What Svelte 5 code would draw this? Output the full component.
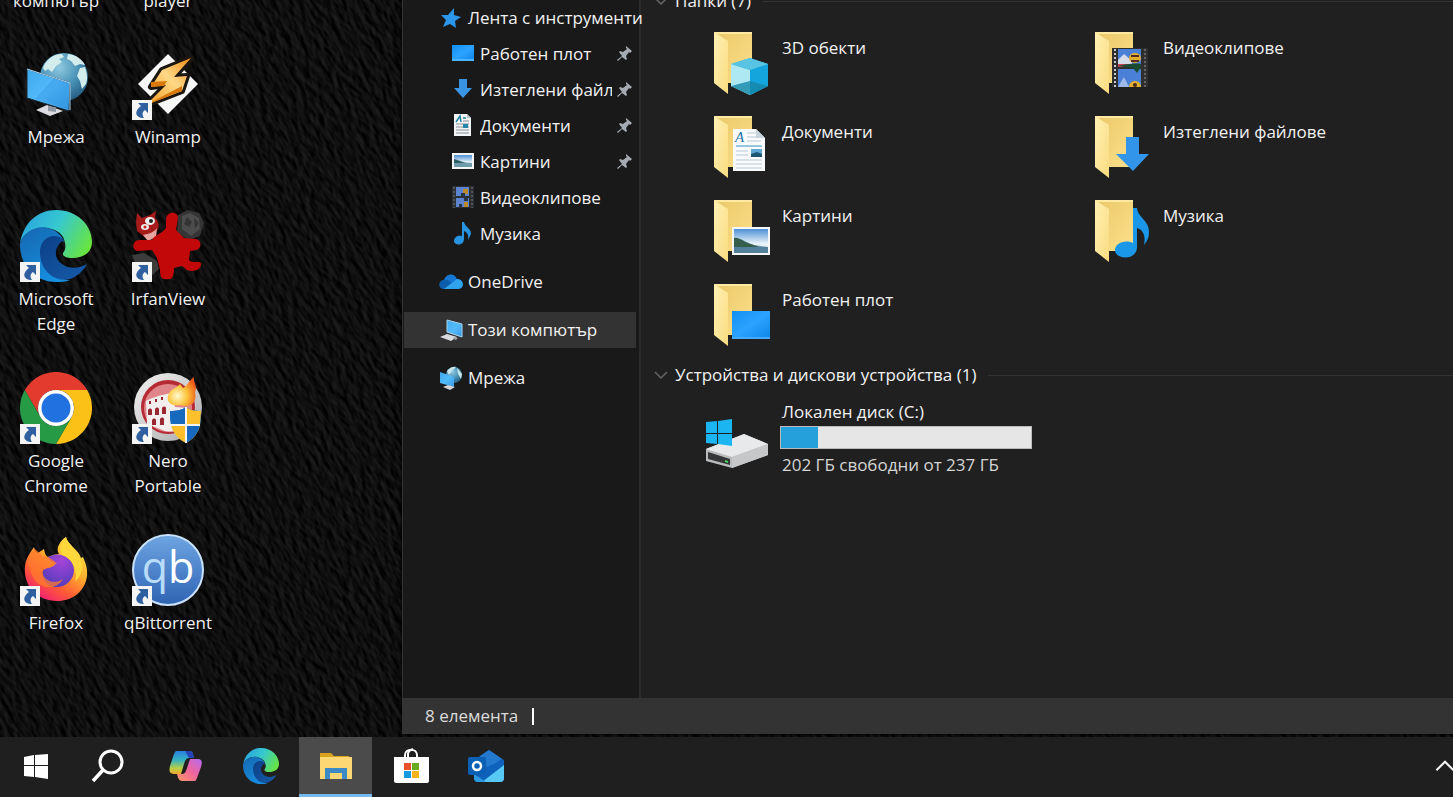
<script>
    let cutLabels = ['компютър', 'player'];

    let shortcuts = [
        { icon: 'network', name: 'Мрежа', link: false },
        { icon: 'winamp', name: 'Winamp', link: true },
        { icon: 'edge', name: 'Microsoft Edge', link: true },
        { icon: 'irfan', name: 'IrfanView', link: true },
        { icon: 'chrome', name: 'Google Chrome', link: true },
        { icon: 'nero', name: 'Nero Portable', link: true },
        { icon: 'firefox', name: 'Firefox', link: true },
        { icon: 'qbit', name: 'qBittorrent', link: true }
    ];

    let quickAccess = [
        { icon: 's-desktop', name: 'Работен плот', pinned: true },
        { icon: 's-download', name: 'Изтеглени файлове', pinned: true },
        { icon: 's-document', name: 'Документи', pinned: true },
        { icon: 's-picture', name: 'Картини', pinned: true },
        { icon: 's-video', name: 'Видеоклипове', pinned: false },
        { icon: 's-music', name: 'Музика', pinned: false }
    ];

    let places = [
        { icon: 's-cloud', name: 'OneDrive' },
        { icon: 's-pc', name: 'Този компютър' },
        { icon: 's-network', name: 'Мрежа' }
    ];

    let folders = [
        { icon: 'f-cube', name: '3D обекти' },
        { icon: 'f-video', name: 'Видеоклипове' },
        { icon: 'f-document', name: 'Документи' },
        { icon: 'f-download', name: 'Изтеглени файлове' },
        { icon: 'f-picture', name: 'Картини' },
        { icon: 'f-music', name: 'Музика' },
        { icon: 'f-desktop', name: 'Работен плот' }
    ];

    let apps = [
        { icon: 't-copilot', name: 'Copilot' },
        { icon: 'edge', name: 'Microsoft Edge' },
        { icon: 't-explorer', name: 'File Explorer' },
        { icon: 't-store', name: 'Microsoft Store' },
        { icon: 't-outlook', name: 'Outlook' }
    ];

    let selected = $state('Този компютър');
    let activeApp = $state('File Explorer');
    let foldersOpen = $state(true);
    let drivesOpen = $state(true);
</script>

<svg class="defs" width="0" height="0" aria-hidden="true">
    <defs>
        <filter id="leather" x="0" y="0" width="100%" height="100%" color-interpolation-filters="sRGB">
            <feTurbulence type="fractalNoise" baseFrequency="0.17 0.08" numOctaves="2" seed="8" result="noise" />
            <feDiffuseLighting in="noise" lighting-color="#262626" surfaceScale="2" diffuseConstant="0.9">
                <feDistantLight azimuth="190" elevation="26" />
            </feDiffuseLighting>
        </filter>
        <linearGradient id="gScreen" x1="0" y1="0" x2="1" y2="1">
            <stop offset="0" stop-color="#3da8ee" /><stop offset=".5" stop-color="#54bbfa" /><stop offset="1" stop-color="#3598e4" />
        </linearGradient>
        <radialGradient id="gGlobe" cx=".4" cy=".3" r=".8">
            <stop offset="0" stop-color="#8fc9e0" /><stop offset=".5" stop-color="#4a93b8" /><stop offset="1" stop-color="#1d5277" />
        </radialGradient>
        <linearGradient id="gBolt" x1="1" y1="0" x2="0" y2="1">
            <stop offset="0" stop-color="#f08a12" /><stop offset=".45" stop-color="#ffd887" /><stop offset="1" stop-color="#f39a1e" />
        </linearGradient>
        <linearGradient id="gEdgeTop" x1="0" y1=".3" x2="1" y2=".7">
            <stop offset="0" stop-color="#2aa5dd" /><stop offset=".45" stop-color="#36c8d0" /><stop offset="1" stop-color="#69e53b" />
        </linearGradient>
        <linearGradient id="gEdgeLeft" x1="0" y1="0" x2=".6" y2="1">
            <stop offset="0" stop-color="#1666ae" /><stop offset="1" stop-color="#168fe0" />
        </linearGradient>
        <linearGradient id="gEdgeDark" x1="0" y1="0" x2="1" y2="1">
            <stop offset="0" stop-color="#0c3f86" /><stop offset="1" stop-color="#165cab" />
        </linearGradient>
        <linearGradient id="gFox" x1=".85" y1="0" x2=".2" y2="1">
            <stop offset="0" stop-color="#fff04a" /><stop offset=".4" stop-color="#ffb02e" /><stop offset=".7" stop-color="#ff5a36" /><stop offset="1" stop-color="#ee1580" />
        </linearGradient>
        <radialGradient id="gFoxBall" cx=".6" cy=".2" r=".9">
            <stop offset="0" stop-color="#a545d8" /><stop offset="1" stop-color="#4b3bb8" />
        </radialGradient>
        <linearGradient id="gQb" x1="0" y1="0" x2="0" y2="1">
            <stop offset="0" stop-color="#6ea5e2" /><stop offset="1" stop-color="#2f64b4" />
        </linearGradient>
        <linearGradient id="gSilver" x1="0" y1="0" x2="1" y2="1">
            <stop offset="0" stop-color="#f3f3f3" /><stop offset="1" stop-color="#a9a9ab" />
        </linearGradient>
        <radialGradient id="gFlame" cx=".35" cy=".65" r=".7">
            <stop offset="0" stop-color="#fffbd0" /><stop offset=".5" stop-color="#fcc43a" /><stop offset="1" stop-color="#ee5b1a" />
        </radialGradient>
        <linearGradient id="gFlap" x1="0" y1="0" x2="1" y2="1">
            <stop offset="0" stop-color="#fff0b4" /><stop offset="1" stop-color="#f9dc80" />
        </linearGradient>
        <linearGradient id="gBack" x1="0" y1="0" x2="1" y2="1">
            <stop offset="0" stop-color="#ebc868" /><stop offset="1" stop-color="#fce08c" />
        </linearGradient>
        <linearGradient id="gSky" x1="0" y1="0" x2="0" y2="1">
            <stop offset="0" stop-color="#4d8fd6" /><stop offset=".6" stop-color="#e6f2f8" />
        </linearGradient>
        <linearGradient id="gDesk" x1="0" y1="0" x2="1" y2="1">
            <stop offset="0" stop-color="#1390f2" /><stop offset=".5" stop-color="#2ba2ff" /><stop offset="1" stop-color="#0d86ea" />
        </linearGradient>
        <linearGradient id="gCopA" x1="0" y1="0" x2="0" y2="1">
            <stop offset="0" stop-color="#2b7fe0" /><stop offset=".4" stop-color="#35b3c0" /><stop offset=".75" stop-color="#b8cf45" /><stop offset="1" stop-color="#f3a72d" />
        </linearGradient>
        <linearGradient id="gCopB" x1="1" y1="0" x2="0" y2="1">
            <stop offset="0" stop-color="#b56bf0" /><stop offset=".5" stop-color="#f0659c" /><stop offset="1" stop-color="#fc9a62" />
        </linearGradient>
    </defs>

    <symbol id="arrow" viewBox="0 0 20 20">
        <rect width="20" height="20" fill="#f4f4f4" />
        <path d="M6 3h10v10l-3-3c-3 2-3 5-1 8C4 18 1 12 9 6Z" fill="#2f5f9f" />
    </symbol>

    <symbol id="network" viewBox="0 0 72 72">
        <circle cx="44" cy="29" r="24" fill="url(#gGlobe)" />
        <path d="M23 20C26 12 33 6 42 6l2 3-5 2 3 3-6 4-4 6-4-3-3 2ZM48 6c8 1 14 5 17 11l-5-1-5 2-4-5-4-2ZM60 20l5-1c2 6 3 12 1 17l-4 5-2-8-3-5Z" fill="#d3edec" />
        <path d="m16 62 11-5 16 6-13 5Z" fill="#dcdce2" />
        <path d="m28 58 8 1v5l-8-1Z" fill="#9099a4" />
        <path d="m7 21 43 14-1 28L7 50Z" fill="url(#gScreen)" stroke="#1c2830" stroke-width="1" />
        <path d="m7 21 43 14v27" fill="none" stroke="#b5d9ef" stroke-width="1" />
        <path d="m34 30 15 5-1 26-33-10Z" fill="#2a8bda" opacity=".35" />
    </symbol>

    <symbol id="winamp" viewBox="0 0 72 72">
        <path d="m36 6 30 30-30 30L6 36Z" fill="#f6f6f6" />
        <path d="M59 10 30 22 19 39l15-2-20 20 36-14 5-15-13 1Z" fill="#241a12" stroke="#1b1510" stroke-width="6" stroke-linejoin="round" />
        <path d="M59 10 30 22 19 39l15-2-20 20 36-14 5-15-13 1Z" fill="url(#gBolt)" />
        <path d="m19 34 16-1-3 5-13 1ZM14 57l36-19v5Z" fill="#d9790c" />
    </symbol>

    <symbol id="edge" viewBox="0 0 72 72">
        <path d="M0 33C4 12 18 0 36 0c22 0 36 16 36 32 0 12-11 16-19 16-7 0-11-2-10-5 2-3 3-5 2-10-1-8-7-13-17-15C14 16 3 24 0 33Z" fill="url(#gEdgeTop)" />
        <path d="M0 33c4-11 16-18 28-15 8 2 14 7 16 14-8-6-20 2-18 16 2 12 12 22 24 22-5 2-10 2-14 2C14 72-1 54 0 33Z" fill="url(#gEdgeLeft)" />
        <path d="M44 30c-8-8-24-4-24 12 0 18 14 31 30 27 8-3 14-9 17-15-7 4-17 6-25 0-9-6-8-18 2-24Z" fill="url(#gEdgeDark)" />
    </symbol>

    <symbol id="irfan" viewBox="0 0 72 72">
        <path d="m46 5 10-5 11 3 5 10-4 13-11 4-12-7Z" fill="#353535" />
        <path d="m50 6 8-3 9 5 1 11-9 7-9-7Z" fill="#4c4c4c" />
        <path d="m55 7 5 5-3 5-5-3Zm7 1 5 5-4 5Z" fill="#333" />
        <path d="M0 45l12-2 13 8 2 8-8 7H8Z" fill="#3c3c3c" />
        <path d="m5 3 5 5 8-3 6-4-1 7c4 3 5 9 2 13l-11 7-9-7-1-9Z" fill="#a81b1b" />
        <ellipse cx="18" cy="11" rx="5" ry="4" fill="#eee" /><circle cx="19" cy="11" r="2" fill="#222" />
        <ellipse cx="13" cy="17" rx="4" ry="3" fill="#eee" /><circle cx="13" cy="17" r="1.6" fill="#c22" />
        <path d="M11 25c6-1 11-3 14-7l-1 9-8 4Z" fill="#e4a5a0" />
        <path d="M34 8c2-7 12-7 12 0l-2 12 8 8 12 1c6 1 6 10 0 11l-6 1-1 9c3 4 12 0 12 4 0 7-9 8-14 6l-5-4-8 2c0 8-2 12-6 11-6 1-8-1-8-9l-3-12-5-8-15 1c-6-2-4-11 2-11h13c2-5 10-6 14-12Z" fill="#c20808" />
    </symbol>

    <symbol id="chrome" viewBox="0 0 72 72">
        <path d="M4.800 18A36 36 0 0 1 67.200 18H36A18 18 0 0 0 20.400 45Z" fill="#e33b2e" />
        <path d="M67.200 18A36 36 0 0 1 36 72L51.600 45A18 18 0 0 0 36 18Z" fill="#fbc116" />
        <path d="M36 72A36 36 0 0 1 4.800 18L20.400 45A18 18 0 0 0 51.600 45Z" fill="#269a45" />
        <circle cx="36" cy="36" r="18" fill="#fff" />
        <circle cx="36" cy="36" r="14.500" fill="#2271e0" />
    </symbol>

    <symbol id="nero" viewBox="0 0 72 72">
        <circle cx="36" cy="35" r="34" fill="url(#gSilver)" />
        <circle cx="36" cy="35" r="27" fill="#b52a33" />
        <circle cx="36" cy="36" r="24" fill="#e0868a" />
        <path d="M14 29c5-3 14-6 26-8l3 14 12 1v19c-8 5-15 5-22 4l-18-7Z" fill="#f3eeee" />
        <g fill="#9a2630">
            <path d="M17 29h2v3h-2zM23 27h2v3h-2zM29 25h2v3h-2zM16 38c2-3 4-1 4 0v5h-4ZM23 37c2-3 4-1 4 0v6h-4ZM30 36c2-3 4-1 4 0v6h-4ZM20 48c2-3 4-1 4 0v5h-4ZM28 47c2-3 4-1 4 0v6h-4Z" />
        </g>
        <path d="M36 24c2-8 8-7 12-12l3 4c4-2 5-6 11-11-1 6 4 9 1 15 2 9-2 14-10 14-6-2-8 1-14-2-3-2-4-5-3-8Z" fill="url(#gFlame)" />
        <path d="M38 39c7 0 12-1 16-4 4 3 8 4 15 4 1 14-3 25-15 32-12-7-16-18-16-32Z" fill="#1769be" />
        <path d="M54 35c4 3 8 4 15 4l-1 14H54Z" fill="#1769be" />
        <path d="M54 53h14c-2 9-7 14-14 18Z" fill="#fcc02c" /><path d="M38 39c7 0 12-1 16-4v18H39c-1-4-1-9-1-14Z" fill="#1769be" />
        <path d="M54 35c4 3 8 4 15 4l-1 14H54Z" fill="#fcc02c" /><path d="M54 53h14c-2 9-7 14-14 18Z" fill="#1769be" /><path d="M39 53h15v18c-8-4-13-10-15-18Z" fill="#fcc02c" />
        <path d="M54 35v36M38 53h30" stroke="#f4f4f4" stroke-width="2" />
    </symbol>

    <symbol id="firefox" viewBox="0 0 72 72">
        <path d="M5 32c1-8 5-13 9-19 1 4 2 5 4 6l6-4c1 5 2 7 4 8 4-2 8-3 11-3-4-6 2-14 7-17 1 7 13 13 15 21l2-1c2 5 5 11 4 19-2 15-14 25-30 25C18 67 3 53 5 32Z" fill="url(#gFox)" />
        <path d="M28 23c12-7 26 1 26 13 0 10-9 18-19 17-9-1-14-9-12-17 3-3 11-1 12-7-4-1-6-3-7-6Z" fill="url(#gFoxBall)" />
        <path d="M8 27c2-6 4-10 7-12l9 8c5-1 8 3 13 6-3 4-12 4-15 9 2 9 12 13 21 7-6 11-22 11-29 0C11 39 9 35 8 27Z" fill="#ff7b2d" opacity=".75" />
        <path d="M42 21c-3-7 0-14 4-18 1 7 16 16 16 30 0 6-3 12-7 14 3-10-2-22-13-26Z" fill="#ffd83c" />
    </symbol>

    <symbol id="qbit" viewBox="0 0 72 72">
        <circle cx="36" cy="36" r="35" fill="url(#gQb)" stroke="#cbe2fb" stroke-width="2" />
    </symbol>

    <!-- navigation pane -->
    <symbol id="s-star" viewBox="0 0 24 24">
        <path d="m15 2 0 7 7 2-6 4 1 7-6-4-7 3 3-7-5-5 7 0Z" fill="#2b96ea" />
    </symbol>
    <symbol id="s-desktop" viewBox="0 0 24 24">
        <path d="M1 3h22v16H1Z" fill="url(#gDesk)" /><path d="M1 17h22v2H1Z" fill="#49b4ff" />
    </symbol>
    <symbol id="s-download" viewBox="0 0 24 24">
        <path d="M8 1h8v9h5l-9 10-9-10h5Z" fill="#3a94e4" />
    </symbol>
    <symbol id="s-document" viewBox="0 0 24 24">
        <path d="M3 0h13l4 4v18H3Z" fill="#f3f4f5" /><path d="m16 0 4 4h-4Z" fill="#b8c4cc" />
        <path d="M5 10h13M5 13h13M5 16h13M5 19h13M12 7h6" stroke="#8a9299" stroke-width="1" />
        <path d="m5 8 4-6 1 6M12 4h3" stroke="#1883a0" stroke-width="1.500" fill="none" /><path d="M12 10h5v4h-5z" fill="#2686a8" />
    </symbol>
    <symbol id="s-picture" viewBox="0 0 24 24">
        <path d="M1 3h22v16H1Z" fill="#f3f5f6" /><path d="M3 5h18v12H3Z" fill="url(#gSky)" />
        <path d="M3 9c5 1 9 4 18 4v4H3Z" fill="#6f9cab" /><path d="M3 9c4 1 7 3 11 4H3Z" fill="#2d5f66" />
    </symbol>
    <symbol id="s-video" viewBox="0 0 24 24">
        <path d="M1 0h22v22H1Z" fill="#2b2f33" /><path d="M5 1h13v9H5zM5 12h13v9H5z" fill="#5c84cf" />
        <path d="M3 1v21M21 1v21" stroke="#777" stroke-width="1" stroke-dasharray="2 2" />
        <path d="M12 3h5v5h-5zM13 16h4v5h-4z" fill="#b98a2b" /><path d="M10 7h4v3h-4zM13 12h4v3h-4zM8 18h3v3H8z" fill="#263345" />
    </symbol>
    <symbol id="s-music" viewBox="0 0 24 24">
        <path d="M11 0h2c1 5 7 6 7 12l-3 6c1-5-1-8-4-9v8c0 7-10 7-10 2 0-4 4-6 8-5Z" fill="#2794e2" />
    </symbol>
    <symbol id="s-cloud" viewBox="0 0 24 24">
        <path d="M5 19c-6 0-6-9 0-9C7 4 15 2 18 9c7 0 8 10 1 10Z" fill="#1478d4" />
        <path d="M5 19c-6 0-6-9 0-9 4-1 7 1 9 5Z" fill="#0e5dab" /><path d="m14 12 4-3c7 0 8 10 1 10H5Z" fill="#2fa4ec" />
    </symbol>
    <symbol id="s-pc" viewBox="0 0 24 24">
        <path d="m8 2 15 4v13L8 14Z" fill="url(#gScreen)" stroke="#a9d5ee" /><path d="m1 19 7-3 10 3-6 4Z" fill="#d9dade" /><path d="m15 19 4 1-2 2-3-1Z" fill="#9ba0a6" />
    </symbol>
    <symbol id="s-network" viewBox="0 0 24 24">
        <circle cx="15" cy="9" r="8" fill="url(#gGlobe)" /><path d="M8 5c3-4 7-5 9-4l-4 4-3 4ZM18 2l5 6-1 5-3-5Z" fill="#c8e5e9" />
        <path d="m1 6 14 5v10L1 17Z" fill="url(#gScreen)" /><path d="m4 21 5-2 7 2-5 3Z" fill="#d2d4d8" />
    </symbol>
    <symbol id="pin" viewBox="0 0 16 16">
        <path d="m9 0 6 5-2 2-1-1-3 4 1 3-1 1-4-3-4 4-1-1 5-4-3-4 1-1 3 1 4-3-1-1Z" fill="#a5abb1" />
    </symbol>

    <!-- folder tiles -->
    <symbol id="folder" viewBox="0 0 72 72">
        <path d="M8 5h38v51H20Z" fill="url(#gBack)" /><path d="M8 5h38v2H11Z" fill="#ffe9a3" />
        <path d="m8 5 14 9v53L8 56Z" fill="url(#gFlap)" />
    </symbol>
    <symbol id="f-cube" viewBox="0 0 72 72">
        <path d="m44 31 18 6v22l-18 9-19-9V37Z" fill="#39bfe0" /><path d="m25 37 19 6v25l-19-9Z" fill="#aee9f3" />
        <path d="m44 43 18-6v22l-18 9Z" fill="#14a5dc" /><path d="m25 37 19-6 18 6-18 6Z" fill="#58c3e2" /><path d="m25 59 19-5 18 5-18 9Z" fill="#1486a8" opacity=".8" />
    </symbol>
    <symbol id="f-document" viewBox="0 0 72 72">
        <path d="M27 18h23l9 9v33H27Z" fill="#f8fafb" /><path d="M50 18v9h9Z" fill="#c9d5dc" />
        <path d="M41 22h9M41 26h10M41 30h14M30 40h12M30 44h12M30 49h26M30 53h26M30 57h26" stroke="#b9c9d4" /><path d="M30 35h26" stroke="#3590c0" stroke-width="1" />
        <path d="M45 38h11v8H45Z" fill="#5ea9d6" /><path d="m45 43 6-2 5 2v3H45Z" fill="#1d5674" />
    </symbol>
    <symbol id="f-picture" viewBox="0 0 72 72">
        <path d="M26 32h38v28H26Z" fill="#f5f7f8" /><path d="M28 34h34v24H28Z" fill="url(#gSky)" />
        <path d="M28 44c6-2 12 4 20 6l14 2v6H28Z" fill="#6d96a8" /><path d="M28 43c6-1 9 4 14 5l11 4H28Z" fill="#365f4b" /><path d="M28 52h34v6H28Z" fill="#527f9c" />
    </symbol>
    <symbol id="f-desktop" viewBox="0 0 72 72">
        <path d="M26 32h38v28H26Z" fill="url(#gDesk)" /><path d="M26 58h38v2H26Z" fill="#45a8ff" />
    </symbol>
    <symbol id="f-video" viewBox="0 0 72 72">
        <path d="M25 21h36v39H25Z" fill="#2e2e2e" /><path d="M31 22h23v18H31zM31 42h23v18H31z" fill="#4b80d8" />
        <path d="M28 22v38" stroke="#c9c9c9" stroke-width="2" stroke-dasharray="2 2" /><path d="M58 22v38" stroke="#666" stroke-width="2" stroke-dasharray="2 2" />
        <path d="m31 33 6-6 8 7v5H31Z" fill="#d5dbe6" /><path d="M31 37h10v3H31Z" fill="#cf3f52" />
        <path d="m31 60 6-10 5 10Z" fill="#9dbbe6" />
        <ellipse cx="48" cy="31" rx="6" ry="5" fill="#e1ae2d" /><path d="M44 28h8v2h-8zM44 33h8v2h-8z" fill="#5a2b20" /><path d="M31 39c8-2 17-3 23-2v3l-4 6-4-5Z" fill="#1a4a31" />
        <path d="M42 60c0-8 12-8 12 0Z" fill="#e1ae2d" /><circle cx="48" cy="58" r="2" fill="#4c291c" />
    </symbol>
    <symbol id="f-download" viewBox="0 0 72 72">
        <path d="M39 26h13v17h10L46 60 29 43h10Z" fill="#3395ea" />
    </symbol>
    <symbol id="f-music" viewBox="0 0 72 72">
        <path d="M46 13h4c1 10 12 12 12 24 0 6-2 9-5 13 2-10-1-15-7-17v19c0 14-22 13-22 3 0-6 9-11 18-7Z" fill="#1a97e8" />
    </symbol>
    <symbol id="drive" viewBox="0 0 72 72">
        <path d="m0 51 38-15 24 10v11L26 70 0 63Z" fill="#b9bbbd" /><path d="m0 51 38-15 24 10-36 13Z" fill="#e8e9ea" /><path d="m26 59 36-13v11L26 70Z" fill="#c5c7c8" />
        <path d="m2 54 22 7v6L2 61Z" fill="#343638" /><path d="m19 62 3 1v2l-3-1Z" fill="#3edb55" />
        <path d="m0 24 11-1v12H0Zm12-1 14-2v14H12ZM0 36h11v10l-11-1Zm12 0h14v12l-14-2Z" fill="#1bb5f2" />
    </symbol>

    <!-- taskbar -->
    <symbol id="t-start" viewBox="0 0 36 36">
        <path d="m6 9 10-2v10H6Zm11-2 13-1v11H17ZM6 18h10v11L6 28Zm11 0h13v13l-13-2Z" fill="#fff" />
    </symbol>
    <symbol id="t-search" viewBox="0 0 36 36">
        <circle cx="21" cy="14" r="11" fill="none" stroke="#fff" stroke-width="3" /><path d="M13 22 3 33" stroke="#fff" stroke-width="3.500" />
    </symbol>
    <symbol id="t-copilot" viewBox="0 0 36 36">
        <path d="M9 3h13c3 0 3 4 4 7h-5c-3 0-4 3-5 6l-3 10H6c-5 0-5-4-4-8l4-12c1-2 1-3 3-3Z" fill="url(#gCopA)" />
        <path d="M17 3h5c3 0 3 4 4 7h-5Z" fill="#2743b8" />
        <path d="M27 33H14c-3 0-4-3-5-7h5c3 0 4-3 5-6l3-9h8c5 0 4 5 3 8l-4 11c-1 2-1 3-2 3Z" fill="url(#gCopB)" />
    </symbol>
    <symbol id="t-explorer" viewBox="0 0 36 36">
        <path d="M2 5h11l3 3h15v6H2Z" fill="#d9a21d" /><path d="M2 9h32v22H2Z" fill="#fcd774" />
        <path d="M7 31V20h22v11h-5v-6H12v6Z" fill="#3b8ac6" />
    </symbol>
    <symbol id="t-store" viewBox="0 0 36 36">
        <path d="M12 10V7c0-7 12-7 12 0v3M15 10V6c0-3 2-4 5-5" fill="none" stroke="#fff" stroke-width="2" />
        <path d="M1 9h35v24c0 1-1 2-2 2H3c-1 0-2-1-2-2Z" fill="#fff" />
        <path d="M11 15h7v7h-7z" fill="#e8502c" /><path d="M19 15h7v7h-7z" fill="#6aaa1f" /><path d="M11 23h7v7h-7z" fill="#159bdd" /><path d="M19 23h7v7h-7z" fill="#f2b21a" />
    </symbol>
    <symbol id="t-outlook" viewBox="0 0 36 36">
        <path d="M6 12 21 2l15 10v18c0 2-1 4-4 4H10c-3 0-4-2-4-4Z" fill="#0d5cb4" /><path d="m12 8 9-6 13 9-15 10Z" fill="#2379ce" />
        <path d="m16 20 20-8v18c0 2-1 4-4 4H10Z" fill="#0f62bb" /><path d="m36 17-22 17h18c3 0 4-2 4-4Z" fill="#58c8f4" /><path d="m6 26 12 8h-8c-3 0-4-2-4-4Z" fill="#2b9be4" />
        <rect y="9" width="18" height="18" rx="2" fill="#0b5fb5" /><circle cx="9" cy="18" r="4" fill="none" stroke="#fff" stroke-width="2.500" />
    </symbol>
    <symbol id="chev" viewBox="0 0 14 14">
        <path d="m1 4 6 6 6-6" fill="none" stroke="currentColor" stroke-width="1.500" />
    </symbol>
</svg>

<div class="screen">
    <div class="workspace">
        <section class="desktop">
            <svg class="texture" aria-hidden="true"><rect width="100%" height="100%" filter="url(#leather)" /></svg>
            <div class="shortcuts">
                {#each cutLabels as label}
                    <span class="cut">{label}</span>
                {/each}
                {#each shortcuts as item}
                    <button class="shortcut">
                        <span class="picture">
                            <svg width="72" height="72" aria-hidden="true"><use href="#{item.icon}" /></svg>
                            {#if item.icon === 'qbit'}
                                <span class="qb" aria-hidden="true">q<b>b</b></span>
                            {/if}
                            {#if item.link}
                                <svg class="badge" width="20" height="20" aria-hidden="true"><use href="#arrow" /></svg>
                            {/if}
                        </span>
                        <span class="caption">{item.name}</span>
                    </button>
                {/each}
            </div>
        </section>

        <section class="window">
            <div class="panes">
                <nav>
                    <a class="root" href="#quick"><svg aria-hidden="true"><use href="#s-star" /></svg><span>Лента с инструменти</span></a>
                    {#each quickAccess as item}
                        <a class="child" href="#{item.icon}">
                            <svg aria-hidden="true"><use href="#{item.icon}" /></svg>
                            <span>{item.name}</span>
                            {#if item.pinned}
                                <svg class="pin" aria-hidden="true"><use href="#pin" /></svg>
                            {/if}
                        </a>
                    {/each}
                    {#each places as place}
                        <a class="root place" class:selected={selected === place.name} href="#{place.icon}" onclick={() => (selected = place.name)}>
                            <svg aria-hidden="true"><use href="#{place.icon}" /></svg><span>{place.name}</span>
                        </a>
                    {/each}
                </nav>

                <main>
                    <h2>
                        <button aria-label="Папки" onclick={() => (foldersOpen = !foldersOpen)}><svg width="14" height="14"><use href="#chev" /></svg></button>
                        Папки (7)
                    </h2>
                    {#if foldersOpen}
                        <div class="tiles folders">
                            {#each folders as folder}
                                <a class="tile" href="#{folder.icon}">
                                    <span class="picture">
                                        <svg width="72" height="72" aria-hidden="true"><use href="#folder" /><use href="#{folder.icon}" /></svg>
                                        {#if folder.icon === 'f-document'}
                                            <em aria-hidden="true">A</em>
                                        {/if}
                                    </span>
                                    <span class="name">{folder.name}</span>
                                </a>
                            {/each}
                        </div>
                    {/if}
                    <h2>
                        <button aria-label="Устройства" onclick={() => (drivesOpen = !drivesOpen)}><svg width="14" height="14"><use href="#chev" /></svg></button>
                        Устройства и дискови устройства (1)
                    </h2>
                    {#if drivesOpen}
                        <div class="tiles">
                            <a class="tile drive" href="#drive">
                                <svg width="72" height="72" aria-hidden="true"><use href="#drive" /></svg>
                                <span class="name info">
                                    <label for="usage">Локален диск (C:)</label>
                                    <progress id="usage" value="35" max="237"></progress>
                                    <small>202 ГБ свободни от 237 ГБ</small>
                                </span>
                            </a>
                        </div>
                    {/if}
                </main>
            </div>
            <footer>8 елемента<i></i></footer>
        </section>
    </div>

    <div class="taskbar">
        <div class="system">
            <button aria-label="Start"><svg><use href="#t-start" /></svg></button>
            <button aria-label="Search"><svg><use href="#t-search" /></svg></button>
        </div>
        {#each apps as app}
            <button class:active={activeApp === app.name} aria-label={app.name} onclick={() => (activeApp = app.name)}>
                <svg><use href="#{app.icon}" /></svg>
            </button>
        {/each}
        <button class="tray" aria-label="Hidden icons"><svg><use href="#chev" /></svg></button>
    </div>
</div>

<style>
    :global(body) {
        background: #0c0c0c;
        overflow: hidden;
    }

    .defs {
        position: absolute;
    }

    .screen {
        display: flex;
        flex-direction: column;
        height: 100vh;
        font-family: "Open Sans", "Noto Sans", sans-serif;
        font-size: 17px;
        line-height: 24px;
        color: #f2f2f2;
    }

    button {
        font: inherit;
        color: inherit;
        background: none;
        border: 0;
        padding: 0;
    }

    a {
        color: inherit;
        text-decoration: none;
    }

    svg {
        display: block;
        flex: none;
    }

    .workspace {
        position: relative;
        flex: 1;
        min-height: 0;
        display: grid;
        grid-template-columns: 402px minmax(0, 1fr);
        grid-template-rows: minmax(0, 1fr);
        overflow: hidden;
    }

    .texture {
        position: absolute;
        left: -30%;
        top: -50%;
        width: 160%;
        height: 200%;
        transform: rotate(-30deg);
    }

    .shortcuts {
        position: relative;
        display: grid;
        grid-template-columns: 112px 112px;
        grid-template-rows: 25px;
        grid-auto-rows: 162px;
        margin-top: -12px;
        line-height: 25px;
        text-align: center;
        text-shadow: 0 1px 2px #000;
    }

    .cut {
        height: 25px;
    }

    .shortcut {
        display: flex;
        flex-direction: column;
        align-items: center;
        gap: 4px;
        padding-top: 35px;
        text-shadow: inherit;
    }

    .picture {
        position: relative;
        flex: none;
    }

    .badge {
        position: absolute;
        left: 0;
        bottom: 0;
    }

    .qb {
        position: absolute;
        inset: 0;
        font-size: 43px;
        line-height: 66px;
        color: #b9dcf8;
        text-shadow: none;
    }

    .qb b {
        font-weight: 400;
        color: #fff;
    }

    .caption {
        width: 104px;
    }

    .window {
        position: relative;
        display: flex;
        flex-direction: column;
        margin-bottom: 3px;
        border-left: 1px solid #333;
        background: #202020;
        box-shadow: 0 0 6px #000;
    }

    .panes {
        flex: 1;
        min-height: 0;
        display: grid;
        grid-template-columns: 238px minmax(0, 1fr);
        overflow: hidden;
    }

    nav {
        background: #191919;
        border-right: 2px solid #2b2b2b;
        white-space: nowrap;
    }

    nav a {
        display: flex;
        align-items: center;
        gap: 5px;
        height: 36px;
        margin: 0 3px 0 1px;
        padding-left: 47px;
    }

    nav svg {
        width: 24px;
        height: 24px;
    }

    nav .root {
        padding-left: 35px;
    }

    nav .place {
        margin-top: 12px;
    }

    nav .selected {
        background: #333;
    }

    nav .child span {
        flex: 1;
        overflow: hidden;
    }

    nav .pin {
        width: 16px;
        height: 16px;
        margin-right: 3px;
    }

    main {
        margin-top: -11px;
        overflow: hidden;
    }

    h2 {
        display: flex;
        align-items: center;
        gap: 7px;
        height: 24px;
        margin: 0;
        padding-left: 13px;
        font-size: 17px;
        font-weight: 400;
    }

    h2::after {
        content: "";
        flex: 1;
        height: 1px;
        margin-left: 5px;
        background: #333;
    }

    h2 button {
        color: #666;
    }

    .tiles {
        display: grid;
        grid-template-columns: 381px 381px;
        grid-auto-rows: 84px;
        margin-left: 65px;
    }

    .folders {
        padding-top: 14px;
    }

    .tile {
        display: flex;
        gap: 4px;
    }

    .tile em {
        position: absolute;
        left: 29px;
        top: 16px;
        font-family: "Liberation Serif", serif;
        font-size: 15px;
        line-height: 20px;
        color: #1878a4;
    }

    .name {
        padding-top: 9px;
    }

    .drive {
        padding-top: 4px;
    }

    .info {
        display: flex;
        flex-direction: column;
    }

    .drive svg {
        margin-top: 7px;
    }

    progress {
        appearance: none;
        flex: none;
        width: 252px;
        height: 23px;
        margin: 2px 0 4px -2px;
        border: 0;
        background: #e6e6e6;
    }

    progress::-webkit-progress-bar {
        background: #e6e6e6;
        border: 1px solid #bcbcbc;
        box-sizing: border-box;
    }

    progress::-webkit-progress-value {
        background: #26a0da;
    }

    small {
        font-size: 17px;
        color: #d5d5d5;
    }

    footer {
        display: flex;
        align-items: center;
        gap: 14px;
        height: 36px;
        padding-left: 22px;
        background: #333;
        color: #dcdcdc;
    }

    footer i {
        width: 2px;
        height: 17px;
        background: #fff;
    }

    .taskbar {
        position: relative;
        display: flex;
        gap: 2px;
        height: 60px;
        background: #1f1f1f;
    }

    .taskbar button {
        display: grid;
        place-items: center;
        width: 73px;
        border-bottom: 3px solid transparent;
    }

    .taskbar svg {
        width: 36px;
        height: 36px;
    }

    .system {
        display: flex;
        margin-right: 3px;
    }

    .taskbar .system button {
        width: 72px;
    }

    .taskbar .active {
        background: #4b4b4b;
        border-color: #76b9ed;
    }

    .taskbar .tray {
        width: 18px;
        margin-left: auto;
    }

    .taskbar .tray svg {
        width: 20px;
        height: 20px;
        transform: rotate(180deg);
    }
</style>
